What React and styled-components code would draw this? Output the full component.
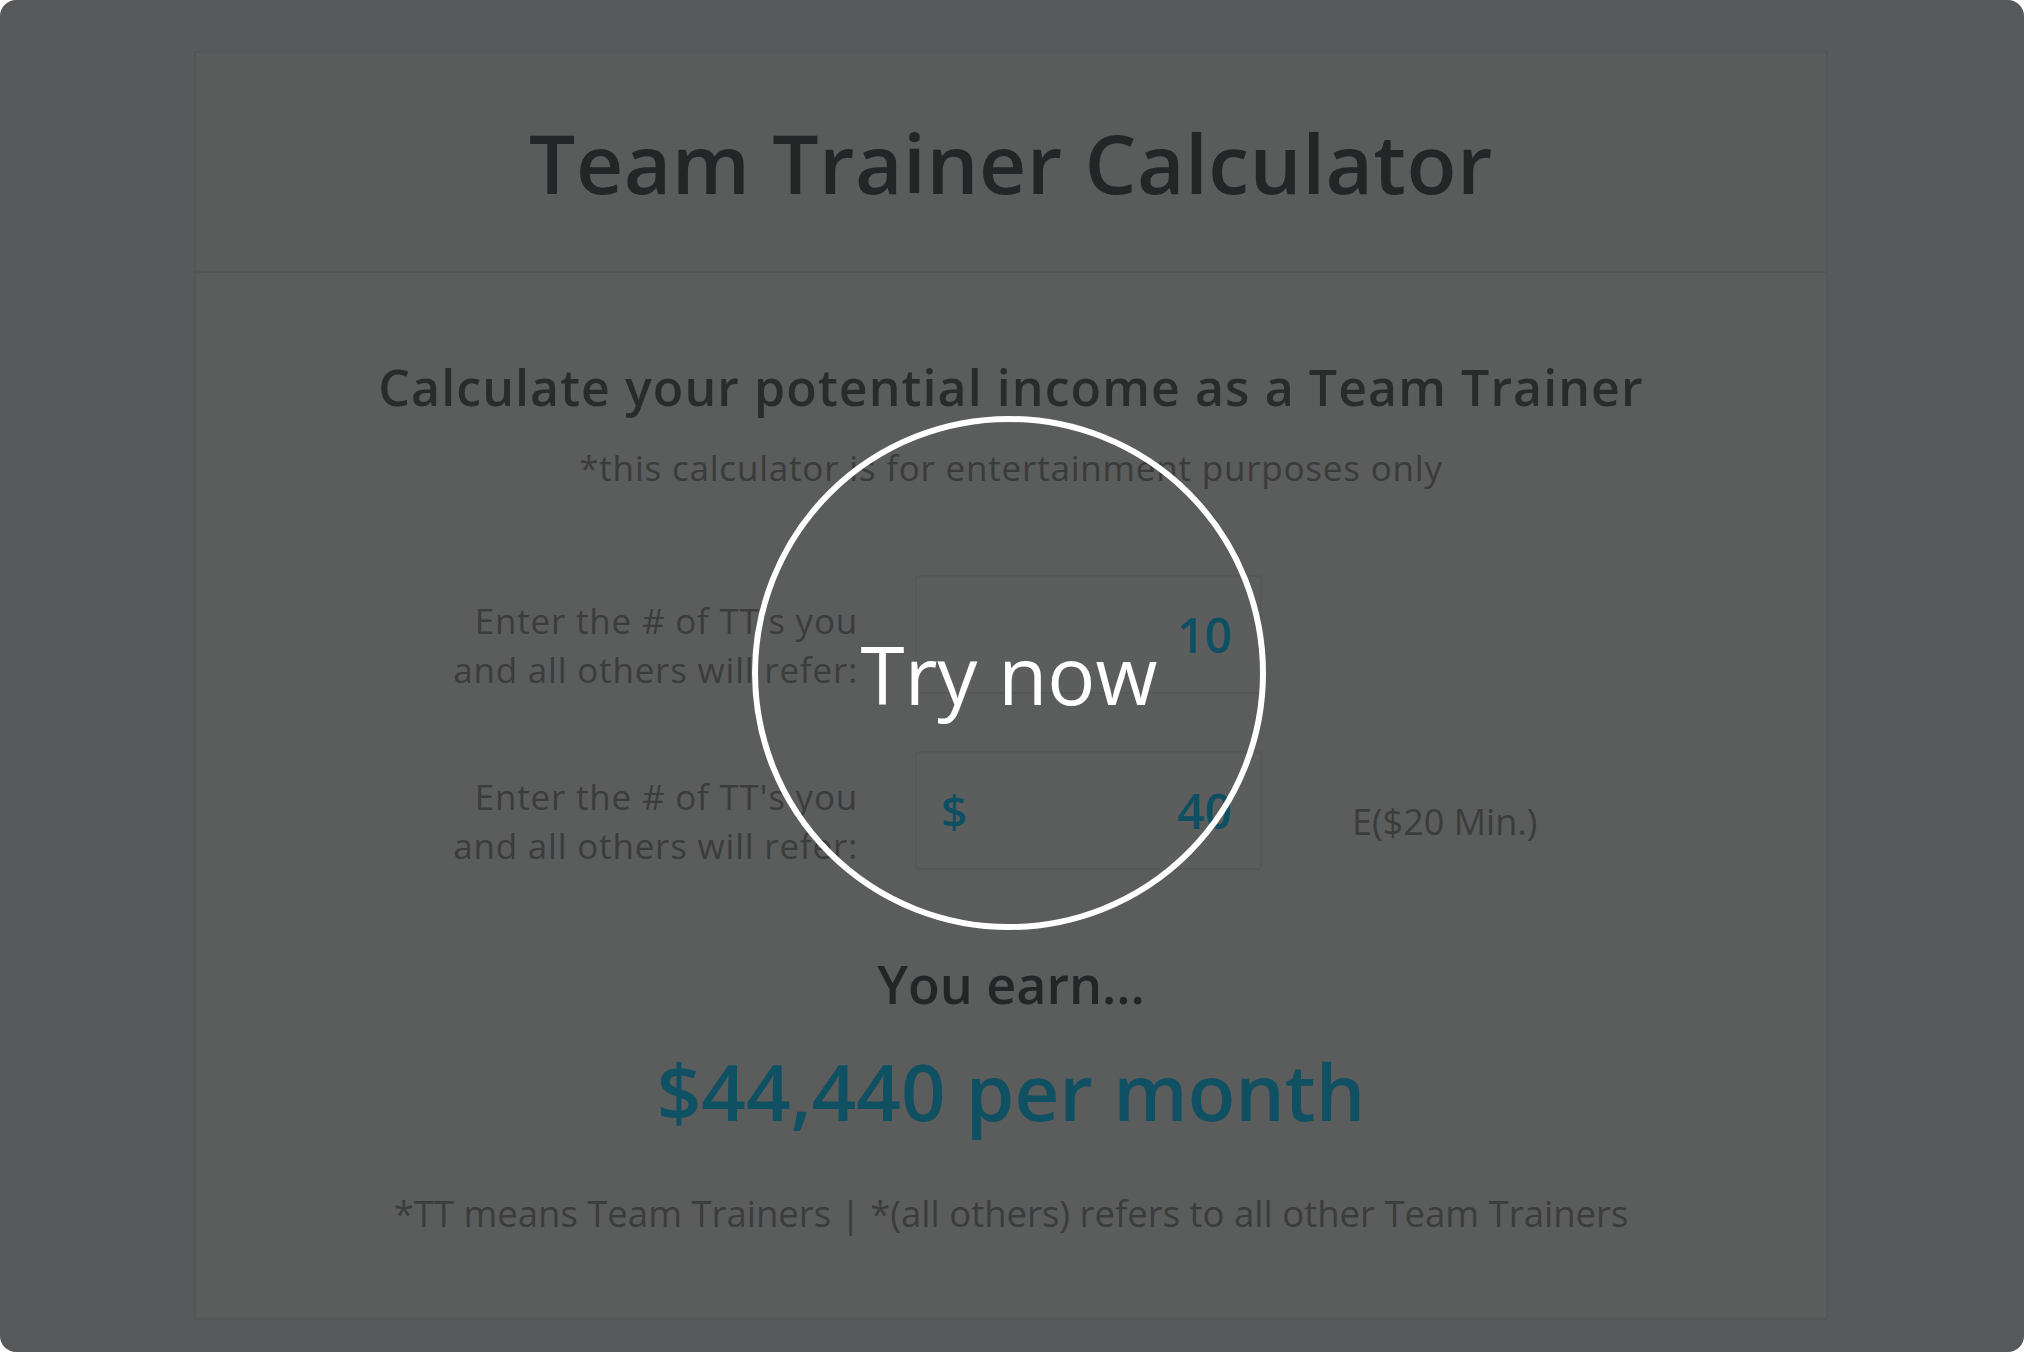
import React, { useState } from "react";
import styled, { createGlobalStyle } from "styled-components";

const GlobalStyle = createGlobalStyle`
  html, body {
    margin: 0;
    padding: 0;
    background: #ffffff;
  }
  * {
    box-sizing: border-box;
  }
`;

export const App = () => {
  const [referrals, setReferrals] = useState("10");
  const [price, setPrice] = useState("40");

  return (
    <>
      <GlobalStyle />
      <Screen>
        <Card>
          <Header>
            <Title>Team Trainer Calculator</Title>
          </Header>
          <Body>
            <Subtitle>Calculate your potential income as a Team Trainer</Subtitle>
            <Disclaimer>*this calculator is for entertainment purposes only</Disclaimer>

            <FormRow>
              <Label>
                Enter the # of TT's you
                <br />
                and all others will refer:
              </Label>
              <InputBox>
                <Input
                  type="text"
                  value={referrals}
                  onChange={(event) => setReferrals(event.target.value)}
                />
              </InputBox>
              <Note />
            </FormRow>

            <FormRow>
              <Label>
                Enter the # of TT's you
                <br />
                and all others will refer:
              </Label>
              <InputBox>
                <Prefix>$</Prefix>
                <Input
                  type="text"
                  value={price}
                  onChange={(event) => setPrice(event.target.value)}
                />
              </InputBox>
              <Note>E($20 Min.)</Note>
            </FormRow>

            <EarnLabel>You earn...</EarnLabel>
            <Amount>$44,440 per month</Amount>
            <Footnote>
              *TT means Team Trainers | *(all others) refers to all other Team Trainers
            </Footnote>
          </Body>
        </Card>
        <TryCircle>
          <TryText>Try now</TryText>
        </TryCircle>
      </Screen>
    </>
  );
};

export default App;

const Screen = styled.div`
  position: relative;
  width: 2024px;
  height: 1352px;
  background: #58595b;
  border-radius: 16px;
  overflow: hidden;
  padding-top: 51px;
  font-family: "Open Sans", "Liberation Sans", sans-serif;
`;
const Card = styled.div`
  width: 1634px;
  height: 1269px;
  margin-left: 194px;
  background: #5b5c5c;
  border: 2px solid #545556;
  border-radius: 3px;
`;
const Header = styled.div`
  height: 220px;
  display: flex;
  align-items: center;
  justify-content: center;
  border-bottom: 2px solid #545556;
  background: #5a5b5b;
`;
const Title = styled.h1`
  margin: 0;
  font-size: 82px;
  font-weight: 600;
  color: #242526;
  letter-spacing: 0.5px;
`;
const Body = styled.div`
  padding-top: 82px;
  display: flex;
  flex-direction: column;
  align-items: stretch;
`;
const Subtitle = styled.h2`
  margin: 0;
  text-align: center;
  font-size: 50px;
  line-height: 64px;
  font-weight: 600;
  letter-spacing: 1.1px;
  color: #2a2b2b;
`;
const Disclaimer = styled.p`
  margin: 26px 0 0;
  text-align: center;
  font-size: 35px;
  line-height: 46px;
  letter-spacing: 0.8px;
  color: #3a3b3b;
`;
const FormRow = styled.div`
  display: grid;
  grid-template-columns: 605px 347px auto;
  column-gap: 57px;
  padding-left: 57px;
  margin-top: 56px;
  align-items: center;

  &:first-of-type {
    margin-top: 83px;
  }
`;
const Label = styled.div`
  text-align: right;
  font-size: 35px;
  line-height: 49px;
  letter-spacing: 0.8px;
  color: #3b3c3c;
  padding-top: 22px;
`;
const InputBox = styled.div`
  height: 119px;
  display: flex;
  align-items: center;
  padding: 0 26px 0 24px;
  border: 2px solid #575858;
  border-radius: 4px;
  background: #5c5d5d;
`;
const Prefix = styled.span`
  font-size: 46px;
  font-weight: 600;
  color: #0e5062;
`;
const Input = styled.input`
  flex: 1;
  min-width: 0;
  border: none;
  outline: none;
  background: transparent;
  text-align: right;
  font-family: "Open Sans", "Liberation Sans", sans-serif;
  font-size: 48px;
  font-weight: 600;
  color: #0e5062;
`;
const Note = styled.div`
  padding-left: 33px;
  padding-top: 22px;
  font-size: 36px;
  color: #3b3c3c;
`;
const EarnLabel = styled.div`
  margin-top: 81px;
  text-align: center;
  font-size: 52px;
  line-height: 66px;
  font-weight: 600;
  color: #242526;
`;
const Amount = styled.div`
  margin-top: 24px;
  text-align: center;
  font-size: 78px;
  line-height: 100px;
  font-weight: 600;
  color: #0f5062;
`;
const Footnote = styled.div`
  margin-top: 50px;
  text-align: center;
  font-size: 36.5px;
  line-height: 44px;
  color: #3b3c3c;
`;
const TryCircle = styled.div`
  position: absolute;
  left: 752px;
  top: 416px;
  width: 514px;
  height: 514px;
  border: 6px solid #ffffff;
  border-radius: 50%;
  display: flex;
  align-items: center;
  justify-content: center;
`;
const TryText = styled.span`
  font-size: 80px;
  font-weight: 400;
  color: #ffffff;
`;
